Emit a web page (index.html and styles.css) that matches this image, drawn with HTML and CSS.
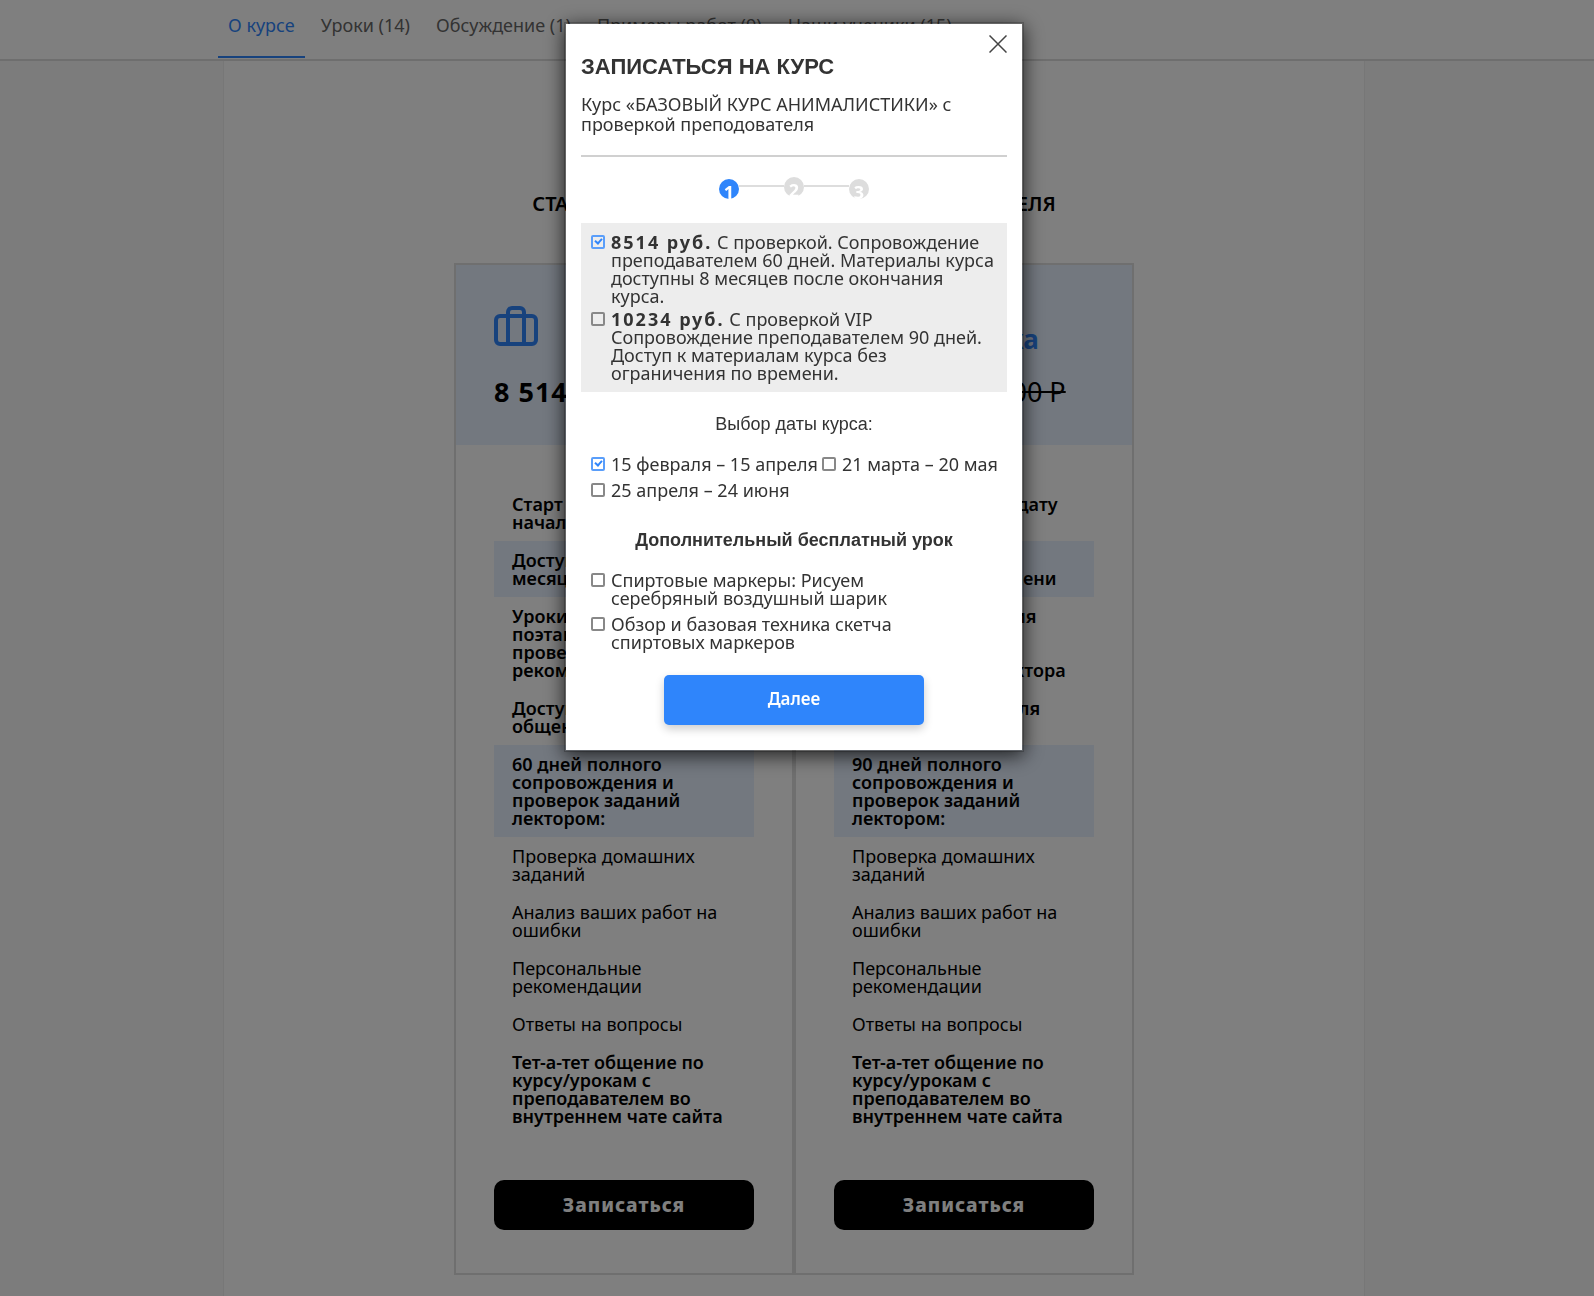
FILE: index.html
```html
<!DOCTYPE html>
<html lang="ru">
<head>
<meta charset="utf-8">
<meta name="viewport" content="width=device-width, initial-scale=1">
<title>Базовый курс анималистики</title>
<link rel="stylesheet" href="styles.css">
</head>
<body>
<div class="page">
  <header class="topbar">
    <nav class="tabs">
      <a class="tab tab--active" href="#about">О курсе</a>
      <a class="tab" href="#lessons">Уроки (14)</a>
      <a class="tab" href="#discussion">Обсуждение (1)</a>
      <a class="tab" href="#works">Примеры работ (9)</a>
      <a class="tab" href="#students">Наши ученики (15)</a>
    </nav>
  </header>

  <div class="page__body">
    <main class="content">
      <h2 class="content__title">СТАРТ КУРСА С ПРОВЕРКОЙ РАБОТ ПРЕПОДАВАТЕЛЯ</h2>
      <div class="plans">
        <section class="plan">
          <div class="plan__head">
            <div class="plan__name">
              <svg class="plan__icon" viewBox="0 0 44 40" fill="none" stroke="currentColor" stroke-width="4" aria-hidden="true"><rect x="2" y="10" width="40" height="28" rx="4"/><path d="M14 38V6a4 4 0 0 1 4-4h8a4 4 0 0 1 4 4v32"/></svg>
              <h3 class="plan__title">Проверка</h3>
            </div>
            <p class="plan__price"><b class="plan__now">8 514 Р</b><s>9 900 Р</s></p>
          </div>
          <ul class="features">
            <li class="feature feature--strong">Старт на удобную дату начала курса</li>
            <li class="feature feature--strong feature--tint">Доступ к курсу 8 месяцев</li>
            <li class="feature feature--strong">Уроки для изучения<br>поэтапная<br>проверка и<br>рекомендации лектора</li>
            <li class="feature feature--strong">Доступ в группы для общения</li>
            <li class="feature feature--strong feature--tint">60 дней полного сопровождения и проверок заданий лектором:</li>
            <li class="feature">Проверка домашних заданий</li>
            <li class="feature">Анализ ваших работ на ошибки</li>
            <li class="feature">Персональные рекомендации</li>
            <li class="feature">Ответы на вопросы</li>
            <li class="feature feature--strong">Тет-а-тет общение по курсу/урокам с преподавателем во внутреннем чате сайта</li>
          </ul>
          <button class="plan__button" type="button">Записаться</button>
        </section>

        <section class="plan">
          <div class="plan__head">
            <div class="plan__name">
              <svg class="plan__icon" viewBox="0 0 44 40" fill="none" stroke="currentColor" stroke-width="4" aria-hidden="true"><rect x="2" y="10" width="40" height="28" rx="4"/><path d="M14 38V6a4 4 0 0 1 4-4h8a4 4 0 0 1 4 4v32"/></svg>
              <h3 class="plan__title">Проверка</h3>
            </div>
            <p class="plan__price"><b class="plan__now">10 234 Р</b><s>11 900 Р</s></p>
          </div>
          <ul class="features">
            <li class="feature feature--strong">Старт на удобную дату начала курса</li>
            <li class="feature feature--strong feature--tint">Доступ к курсу без<br>ограничения времени</li>
            <li class="feature feature--strong">Уроки для изучения<br>поэтапная<br>проверка и<br>рекомендации лектора</li>
            <li class="feature feature--strong">Доступ в группы для общения</li>
            <li class="feature feature--strong feature--tint">90 дней полного сопровождения и проверок заданий лектором:</li>
            <li class="feature">Проверка домашних заданий</li>
            <li class="feature">Анализ ваших работ на ошибки</li>
            <li class="feature">Персональные рекомендации</li>
            <li class="feature">Ответы на вопросы</li>
            <li class="feature feature--strong">Тет-а-тет общение по курсу/урокам с преподавателем во внутреннем чате сайта</li>
          </ul>
          <button class="plan__button" type="button">Записаться</button>
        </section>
      </div>
    </main>
  </div>
</div>

<div class="overlay">
  <div class="modal" role="dialog" aria-modal="true" aria-labelledby="modal-title">
    <button class="modal__close" type="button" aria-label="Закрыть">
      <svg viewBox="0 0 18 18" fill="none" stroke="currentColor" stroke-width="1.5" aria-hidden="true"><path d="M0.5 0.5l17 17M17.5 0.5l-17 17"/></svg>
    </button>
    <h1 class="modal__title" id="modal-title">ЗАПИСАТЬСЯ НА КУРС</h1>
    <p class="modal__course">Курс «БАЗОВЫЙ КУРС АНИМАЛИСТИКИ» с проверкой преподователя</p>

    <ol class="steps">
      <li class="step step--current">1</li>
      <li class="step step--raised">2</li>
      <li class="step">3</li>
    </ol>

    <form>
      <div class="tariffs">
        <label class="option"><input class="check" type="checkbox" checked><span><b class="sum">8514 руб.</b> С проверкой. Сопровождение преподавателем 60 дней. Материалы курса доступны 8 месяцев после окончания курса.</span></label>
        <label class="option"><input class="check" type="checkbox"><span><b class="sum">10234 руб.</b> С проверкой VIP Сопровождение преподавателем 90 дней. Доступ к материалам курса без ограничения по времени.</span></label>
      </div>

      <h2 class="group-title">Выбор даты курса:</h2>
      <div class="dates">
        <label class="option"><input class="check" type="checkbox" checked><span>15 февраля – 15 апреля</span></label>
        <label class="option"><input class="check" type="checkbox"><span>21 марта – 20 мая</span></label>
        <label class="option"><input class="check" type="checkbox"><span>25 апреля – 24 июня</span></label>
      </div>

      <h2 class="group-title group-title--strong">Дополнительный бесплатный урок</h2>
      <div class="extras">
        <label class="option"><input class="check" type="checkbox"><span>Спиртовые маркеры: Рисуем серебряный воздушный шарик</span></label>
        <label class="option"><input class="check" type="checkbox"><span>Обзор и базовая техника скетча спиртовых маркеров</span></label>
      </div>

      <button class="next" type="submit">Далее</button>
    </form>
  </div>
</div>
</body>
</html>
```
FILE: styles.css
```css
:root {
  --blue: #2f85fb;
  --tint: #e6f0ff;
  --line: #dedede;
  --gutter: 6px;
  --body-font: "Noto Sans", sans-serif;
  --head-font: "Liberation Sans", Arial, sans-serif;
}

* {
  box-sizing: border-box;
}

body,
h1,
h2,
h3,
p,
ul,
ol {
  margin: 0;
  padding: 0;
}

ul,
ol {
  list-style: none;
}

body {
  background: #f9f9f9;
  color: #000;
  font: 18px/18px var(--body-font);
}

button {
  border: 0;
  font-family: inherit;
  cursor: pointer;
}

/* Page */

.page {
  display: flex;
  flex-direction: column;
  min-height: 100vh;
}

.topbar {
  padding-right: var(--gutter);
  background: #fff;
  border-bottom: 2px solid #dcdcdc;
}

.tabs {
  display: flex;
  gap: 6px;
  max-width: 1152px;
  margin: 0 auto;
  padding-bottom: 1px;
}

.tab {
  padding: 16px 10px 22px;
  border-bottom: 2px solid transparent;
  color: #666;
  text-decoration: none;
}

.tab--active {
  border-color: var(--blue);
  color: var(--blue);
}

.page__body {
  flex: 1;
  display: flex;
  justify-content: center;
  padding-right: var(--gutter);
}

.content {
  width: 100%;
  max-width: 1142px;
  padding: 131px 16px 21px;
  background: #fff;
  border: solid #eee;
  border-width: 0 1px;
}

.content__title {
  font-size: 20px;
  line-height: 24px;
  font-weight: 600;
  text-align: center;
}

.plans {
  display: flex;
  justify-content: center;
  margin-top: 47px;
}

.plan {
  display: flex;
  flex-direction: column;
  width: 340px;
  border: 2px solid var(--line);
}

.plan__head {
  padding: 41px 38px 36px;
  background: var(--tint);
}

.plan__name {
  display: flex;
  align-items: flex-end;
  gap: 30px;
  height: 47px;
  color: var(--blue);
}

.plan__icon {
  flex: none;
  align-self: flex-start;
  width: 44px;
  height: 40px;
}

.plan__title {
  font-size: 26px;
  line-height: 28px;
}

.plan__price {
  display: flex;
  gap: 8px;
  margin-top: 22px;
  font-size: 27px;
  line-height: 34px;
  white-space: nowrap;
}

.plan__now {
  letter-spacing: 1px;
}

.features {
  flex: 1;
  padding: 40px 38px 45px;
}

.feature {
  padding: 10px 18px;
}

.feature--strong {
  font-weight: 600;
}

.feature--tint {
  background: var(--tint);
}

.plan__button {
  height: 50px;
  margin: 0 38px 43px;
  border-radius: 10px;
  background: #000;
  color: #fff;
  font-size: 19px;
  font-weight: 800;
  letter-spacing: 1px;
}

/* Sign-up window */

.overlay {
  position: fixed;
  inset: 0;
  display: flex;
  justify-content: center;
  align-items: flex-start;
  padding: 22px var(--gutter) 22px 0;
  overflow: auto;
  background: rgba(0, 0, 0, 0.5);
}

.modal {
  position: relative;
  width: 460px;
  padding: 30px 15px 25px;
  border: 2px solid rgba(0, 0, 0, 0.2);
  background: #fff;
  background-clip: padding-box;
  box-shadow: 0 4px 18px rgba(0, 0, 0, 0.7);
  color: #333;
}

.modal__close {
  position: absolute;
  top: 11px;
  right: 15px;
  width: 18px;
  height: 18px;
  padding: 0;
  background: none;
  color: #444;
}

.modal__close svg {
  display: block;
}

.modal__title {
  font: bold 22px/26px var(--head-font);
}

.modal__course {
  margin-top: 14px;
  padding-bottom: 21px;
  border-bottom: 2px solid #d0d0d0;
  line-height: 20px;
}

.steps {
  display: flex;
  justify-content: center;
  align-items: flex-end;
  gap: 45px;
  height: 22px;
  margin: 20px 0 24px;
}

.step {
  position: relative;
  width: 20px;
  height: 20px;
  border-radius: 50%;
  background: #ddd;
  color: #fff;
  font-weight: bold;
  line-height: 27px;
  text-align: center;
}

.step--current {
  background: var(--blue);
}

.step--raised {
  align-self: flex-start;
}

/* connector from each step to the next one */
.step:not(:last-child)::after {
  content: "";
  position: absolute;
  top: 6px;
  left: 100%;
  width: 45px;
  height: 2px;
  background: #ddd;
}

.step--raised:not(:last-child)::after {
  top: 8px;
}

.tariffs {
  display: grid;
  gap: 5px;
  padding: 10px;
  background: #ededed;
}

.option {
  display: flex;
  gap: 6px;
}

.sum {
  letter-spacing: 2px;
}

.check {
  position: relative;
  flex: none;
  width: 14px;
  height: 14px;
  margin: 2px 0 0;
  appearance: none;
  border: 2px solid #888;
  border-radius: 2px;
  background: #fff;
}

.tariffs .check {
  background: none;
}

.check:checked {
  border-color: #5a9efa;
}

.check:checked::after {
  content: "";
  position: absolute;
  left: 3px;
  top: 0;
  width: 3px;
  height: 5px;
  border: solid var(--blue);
  border-width: 0 2px 2px 0;
  transform: rotate(42deg);
}

.group-title {
  margin: 22px 0 21px;
  font: 18px/20px var(--head-font);
  text-align: center;
}

.group-title--strong {
  margin-top: 31px;
  font-weight: bold;
}

.dates {
  display: flex;
  flex-wrap: wrap;
  gap: 8px 4px;
  padding-left: 10px;
  white-space: nowrap;
}

.extras {
  display: grid;
  gap: 8px;
  padding: 0 96px 0 10px;
}

.next {
  display: block;
  width: 260px;
  height: 50px;
  margin: 24px auto 0;
  padding: 0 0 3px;
  border-radius: 5px;
  background: var(--blue);
  box-shadow: 0 4px 10px rgba(0, 0, 0, 0.2);
  color: #fff;
  font-size: 17px;
  font-weight: 600;
}
```
